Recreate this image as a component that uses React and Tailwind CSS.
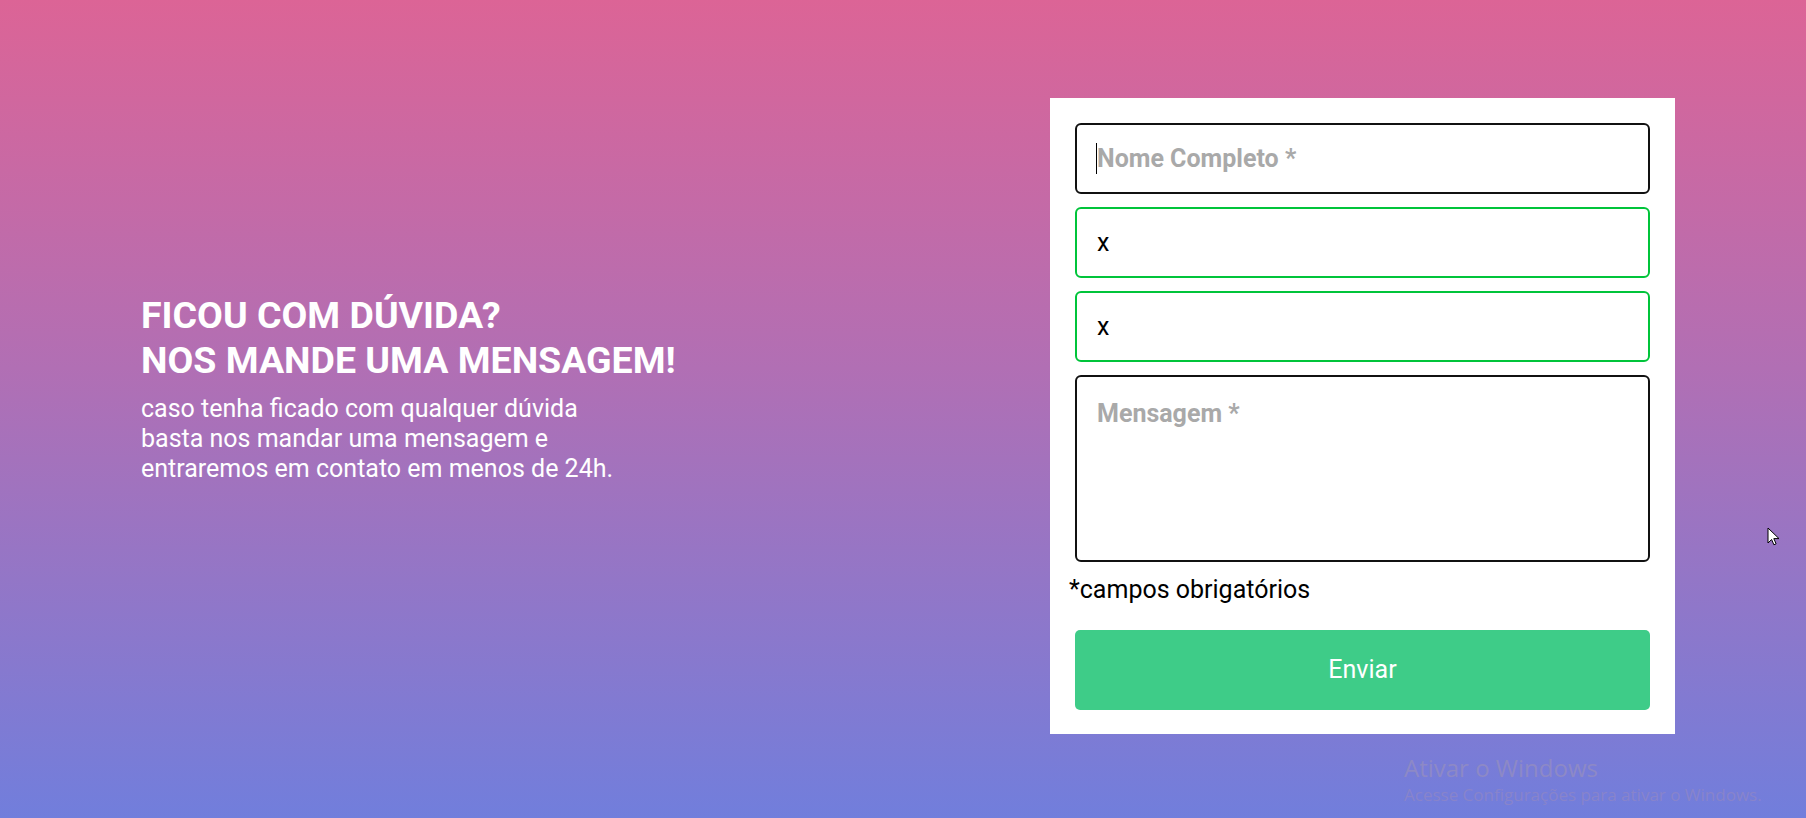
import { useState } from "react";

function CursorArrow() {
  return (
    <svg viewBox="0 0 12 19" className="h-[19px] w-[12px]">
      <path d="M1 1v15l3.6-3.5 2.3 5.3 2.2-1-2.3-5.2H12z" fill="#fff" stroke="#000" strokeWidth="1" strokeLinejoin="round" />
    </svg>
  );
}

export default function App() {
  const [form, setForm] = useState({ nome: "", email: "x", telefone: "x", mensagem: "" });

  const update = (key) => (event) => setForm((prev) => ({ ...prev, [key]: event.target.value }));

  const inputBase =
    "h-[71px] w-full rounded-[6px] border-2 bg-white px-[20px] text-[25px] text-black outline-none placeholder:font-bold placeholder:text-[#a9a9a9]";

  return (
    <main
      className="relative flex h-[818px] w-full overflow-hidden bg-[linear-gradient(180deg,#dc6496_0%,#b16fb4_45%,#717edc_100%)]"
      style={{ fontFamily: "Roboto, 'Liberation Sans', sans-serif" }}
    >
      <section className="w-[1050px] shrink-0 pl-[141px] pt-[293px] text-white">
        <h1 className="text-[37.5px] font-bold uppercase leading-[45px]">
          Ficou com dúvida?
          <br />
          Nos mande uma mensagem!
        </h1>
        <p className="mt-[11px] text-[25px] leading-[30px]">
          caso tenha ficado com qualquer dúvida
          <br />
          basta nos mandar uma mensagem e
          <br />
          entraremos em contato em menos de 24h.
        </p>
      </section>

      <form
        className="mt-[98px] flex h-[636px] w-[625px] shrink-0 flex-col bg-white px-[25px] pt-[25px] pb-[24px]"
        onSubmit={(event) => event.preventDefault()}
      >
        <div className="flex flex-col gap-[13px]">
          <div className="relative">
            <input
              className={`${inputBase} border-[#111]`}
              placeholder="Nome Completo *"
              value={form.nome}
              onChange={update("nome")}
            />
            {form.nome === "" ? (
              <span className="pointer-events-none absolute left-[21px] top-[20px] h-[31px] w-px bg-black" />
            ) : null}
          </div>
          <input className={`${inputBase} border-[#00c43a]`} value={form.email} onChange={update("email")} />
          <input className={`${inputBase} border-[#00c43a]`} value={form.telefone} onChange={update("telefone")} />
          <textarea
            className="h-[187px] w-full resize-none rounded-[6px] border-2 border-[#111] bg-white px-[20px] py-[18px] text-[25px] text-black outline-none placeholder:font-bold placeholder:text-[#a9a9a9]"
            placeholder="Mensagem *"
            value={form.mensagem}
            onChange={update("mensagem")}
          />
        </div>
        <p className="-ml-[6px] mt-[14px] text-[25px] leading-[28px] text-black">*campos obrigatórios</p>
        <button
          type="submit"
          className="mt-[26px] h-[80px] w-full rounded-[5px] bg-[#3ecc88] text-[25px] text-white"
        >
          Enviar
        </button>
      </form>

      <div className="absolute left-[1767px] top-[527px]">
        <CursorArrow />
      </div>

      <div
        className="absolute left-[1404px] top-[752px] text-[#8d89c6]"
        style={{ fontFamily: "'Open Sans', 'Noto Sans', sans-serif" }}
      >
        <div className="text-[24px] leading-[32px]">Ativar o Windows</div>
        <div className="text-[17px] leading-[22px] text-[#8884cb]">Acesse Configurações para ativar o Windows.</div>
      </div>
    </main>
  );
}
